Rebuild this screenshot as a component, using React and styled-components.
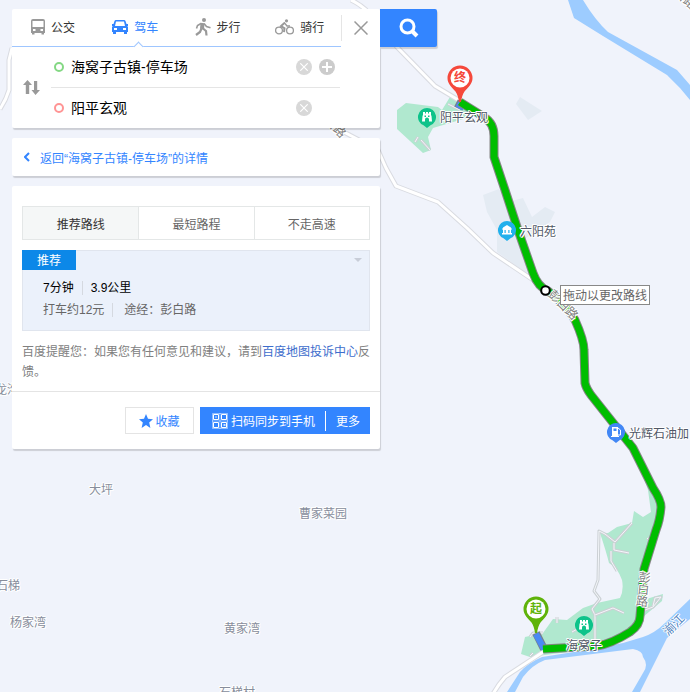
import React, { useState } from 'react';
import styled, { createGlobalStyle, css } from 'styled-components';

const GlobalStyle = createGlobalStyle`
  * {
    box-sizing: border-box;
  }

  body {
    margin: 0;
    background: #f0f3fb;
    font-family: 'Liberation Sans', 'Noto Sans CJK SC', sans-serif;
    font-size: 12px;
    color: #333333;
  }

  button,
  input {
    margin: 0;
    padding: 0;
    border: 0;
    background: none;
    font: inherit;
    color: inherit;
  }

  button {
    cursor: pointer;
  }

  svg {
    display: block;
    flex-shrink: 0;
  }
`;

const Page = styled.div`
  position: relative;
  min-height: 100vh;
  padding: 9px 12px;
  overflow: hidden;
`;

const MapLayer = styled.div`
  position: absolute;
  inset: 0;
  overflow: hidden;
`;

const MapDrawing = styled.svg`
  width: 100%;
  height: 100%;
`;

const MapLabel = styled.span`
  position: absolute;
  left: ${(props) => props.$x}px;
  top: ${(props) => props.$y}px;
  line-height: 16px;
  white-space: nowrap;
  color: ${(props) => props.$color || '#878d9c'};
  text-shadow: 1px 0 #ffffff, -1px 0 #ffffff, 0 1px #ffffff, 0 -1px #ffffff,
    1px 1px #ffffff, -1px -1px #ffffff;
  transform: rotate(${(props) => props.$angle || 0}deg);
  ${(props) =>
    props.$vertical &&
    css`
      writing-mode: vertical-rl;
    `}
`;

const Marker = styled.div`
  position: absolute;
  left: ${(props) => props.$x}px;
  top: ${(props) => props.$y}px;
  width: ${(props) => props.$size}px;
`;

const MarkerText = styled.span`
  position: absolute;
  top: 5px;
  left: 0;
  width: 100%;
  line-height: 16px;
  text-align: center;
  font-weight: 700;
  color: ${(props) => props.$color};
`;

const DragTip = styled.div`
  position: absolute;
  left: 560px;
  top: 285px;
  padding: 2px 2px 0;
  line-height: 16px;
  white-space: nowrap;
  color: #666666;
  background: #ffffff;
  border: 1px solid #888888;
`;

const Sidebar = styled.div`
  position: relative;
  width: min-content;
  display: grid;
  gap: 10px;
`;

const SearchRow = styled.div`
  display: flex;
  align-items: flex-start;
`;

const Card = styled.section`
  width: 368px;
  background: #ffffff;
  border-radius: 2px;
  box-shadow: 1px 2px 1px rgba(0, 0, 0, 0.15);
`;

const SearchButton = styled.button`
  width: 57px;
  height: 38px;
  display: flex;
  align-items: center;
  justify-content: center;
  color: #ffffff;
  background: #3385ff;
  border-radius: 0 2px 2px 0;
  box-shadow: 1px 2px 1px rgba(0, 0, 0, 0.15);
`;

const ModeRow = styled.div`
  display: flex;
  align-items: center;
  height: 38px;
`;

const ModeTabs = styled.div`
  flex: 1;
  display: flex;
  height: 38px;
  border-bottom: 1px solid #9fc6ff;
`;

const ModeTab = styled.button`
  position: relative;
  flex: 1;
  display: flex;
  align-items: center;
  justify-content: center;
  gap: 6px;
  padding-bottom: 2px;
  color: ${(props) => (props.$active ? '#3385ff' : '#333333')};

  svg {
    color: ${(props) => (props.$active ? '#3385ff' : '#999999')};
  }

  ${(props) =>
    props.$active &&
    css`
      &::after {
        content: '';
        position: absolute;
        left: 50%;
        bottom: -4px;
        width: 6px;
        height: 6px;
        background: #ffffff;
        border-top: 1px solid #9fc6ff;
        border-left: 1px solid #9fc6ff;
        transform: rotate(45deg);
      }
    `}
`;

const CloseButton = styled.button`
  width: 39px;
  height: 26px;
  display: flex;
  align-items: center;
  justify-content: center;
  border-left: 1px solid #e5e5e5;
`;

const Places = styled.div`
  display: flex;
  height: 81px;
`;

const SwapButton = styled.button`
  width: 39px;
  display: flex;
  align-items: center;
  justify-content: center;
`;

const PlaceList = styled.div`
  width: 289px;
`;

const PlaceRow = styled.div`
  display: flex;
  align-items: center;
  height: 40px;
  padding-left: 3px;

  & + & {
    height: 41px;
    border-top: 1px solid #e5e5e5;
  }
`;

const Ring = styled.label`
  width: 10px;
  height: 10px;
  border: 2px solid ${(props) => props.$color};
  border-radius: 50%;
`;

const PlaceInput = styled.input`
  width: 226px;
  height: 30px;
  padding: 0 0 2px 7px;
  font-size: 14px;
  color: #000000;
  outline: none;
`;

const RoundButton = styled.button`
  width: 16px;
  height: 16px;
  margin-left: 6px;
  display: flex;
  align-items: center;
  justify-content: center;
  color: #ffffff;
  background: ${(props) => (props.$dark ? '#cccccc' : '#d8d8d8')};
  border-radius: 50%;

  & + & {
    margin-left: 7px;
  }
`;

const BackLink = styled.a`
  display: flex;
  align-items: center;
  gap: 10px;
  height: 38px;
  padding-left: 12px;
  color: #3385ff;
  text-decoration: none;
`;

const RouteBody = styled.div`
  padding: 20px 10px 9px;
  border-bottom: 1px solid #e4e4e4;
`;

const PlanTabs = styled.div`
  display: grid;
  grid-template-columns: repeat(3, 1fr);
  height: 34px;
  margin-bottom: 10px;
  border: 1px solid #e4e7e7;
`;

const PlanTab = styled.button`
  color: ${(props) => (props.$active ? '#333333' : '#666666')};
  background: ${(props) => (props.$active ? '#f5f7f7' : '#ffffff')};

  & + & {
    border-left: 1px solid #e4e7e7;
  }
`;

const RouteItem = styled.div`
  position: relative;
  height: 81px;
  padding: 26px 20px;
  background: #ebf1fb;
  border: 1px solid #e0e5ee;
`;

const RouteTag = styled.span`
  position: absolute;
  left: -1px;
  top: -1px;
  width: 54px;
  height: 20px;
  line-height: 22px;
  text-align: center;
  color: #ffffff;
  background: #0c88e8;
`;

const Expand = styled.button`
  position: absolute;
  right: 7px;
  top: 7px;
  border-top: 4px solid #c8cdd8;
  border-left: 4px solid transparent;
  border-right: 4px solid transparent;
`;

const RouteLine = styled.div`
  display: flex;
  align-items: center;
  line-height: 22px;
  color: ${(props) => (props.$main ? '#000000' : '#666666')};

  span + span {
    margin-left: 8px;
    padding-left: 8px;
    line-height: 14px;
    border-left: 1px solid #d5d9e0;
  }

  &:last-child span + span {
    padding-left: 11px;
  }
`;

const Reminder = styled.p`
  margin: 11px -2px 0 0;
  line-height: 20px;
  color: #808080;

  a {
    color: #3d6dcc;
    text-decoration: none;
  }
`;

const Actions = styled.div`
  display: flex;
  justify-content: flex-end;
  gap: 6px;
  padding: 15px 10px;
`;

const SaveButton = styled.button`
  width: 69px;
  height: 27px;
  display: flex;
  align-items: center;
  justify-content: center;
  gap: 2px;
  color: #3385ff;
  border: 1px solid #e4e4e4;
`;

const SendGroup = styled.div`
  display: flex;
  align-items: center;
  height: 27px;
  color: #ffffff;
  background: #3385ff;
`;

const SendButton = styled.button`
  display: flex;
  align-items: center;
  gap: 3px;
  height: 20px;
  padding: 0 10px 0 12px;

  & + & {
    padding: 0 10px;
    border-left: 1px solid #ffffff;
  }
`;

const BusIcon = () => (
  <svg width="14" height="16" viewBox="0 0 14 16" fill="currentColor">
    <path
      fillRule="evenodd"
      d="M2 0h10a2 2 0 0 1 2 2v12h-1v1.500h-2.500V14h-7v1.500H1V14H0V2a2 2 0 0 1 2-2zM1.500 2v6h11V2zM2 10v2h2.500v-2zM9.500 10v2H12v-2z"
    />
  </svg>
);

const CarIcon = () => (
  <svg width="16" height="14" viewBox="0 0 16 14" fill="currentColor">
    <path
      fillRule="evenodd"
      d="M4 0h8q1.200 0 1.500 1L14.500 4H16v2h-.8l.8 1v5h-1v2h-3v-2H4v2H1v-2H0V7l.8-1H0V4h1.500L2.500 1Q2.800 0 4 0zM4 1.500 3 6h10L12 1.500zM2 8v2h3V8zM11 8v2h3V8z"
    />
  </svg>
);

const WalkIcon = () => (
  <svg width="16" height="18" viewBox="0 0 16 18" fill="none" stroke="currentColor">
    <circle cx="9" cy="2" r="2" fill="currentColor" stroke="none" />
    <path d="M7.500 5 7 11" strokeWidth="4" />
    <path d="M6 5.500 2.500 7.500 1.500 10.500M9 5.500l2.500 3 4 1.200" strokeWidth="1.600" />
    <path d="M6.500 10.500 5 14 1 17M8 10.500l3 2.500 .5 4.500" strokeWidth="2.200" />
  </svg>
);

const BikeIcon = () => (
  <svg width="19" height="16" viewBox="0 0 19 16" fill="none" stroke="currentColor">
    <circle cx="4" cy="11.500" r="3.400" strokeWidth="1.300" />
    <circle cx="15" cy="11.500" r="3.400" strokeWidth="1.300" />
    <circle cx="11.500" cy="1.800" r="1.600" fill="currentColor" stroke="none" />
    <path d="M10 3.500 6 7l3.500 2.200-.5 4" strokeWidth="2" />
    <path d="M10 4.500 12 7h3" strokeWidth="1.300" />
  </svg>
);

const SwapIcon = () => (
  <svg width="18" height="15" viewBox="0 0 18 15" fill="#999999">
    <path d="M4.500 0 9 5H6.200v9H2.800V5H0zM12.500 15 8.500 10h2.500V1h3.200v9H17z" />
  </svg>
);

const CrossIcon = ({ size, stroke, width = 1 }) => (
  <svg width={size} height={size} viewBox="0 0 14 14" fill="none" stroke={stroke} strokeWidth={width}>
    <path d="M0.500 0.500l13 13M13.500 0.500l-13 13" />
  </svg>
);

const PlusIcon = () => (
  <svg width="10" height="10" viewBox="0 0 10 10" stroke="#ffffff" strokeWidth="2">
    <path d="M5 0v10M0 5h10" />
  </svg>
);

const SearchIcon = () => (
  <svg width="20" height="20" viewBox="0 0 20 20" fill="none" stroke="currentColor">
    <circle cx="8.500" cy="8.500" r="6.500" strokeWidth="3" />
    <path d="M13 13l5 5" strokeWidth="4" />
  </svg>
);

const ChevronIcon = () => (
  <svg width="6" height="10" viewBox="0 0 6 10" fill="none" stroke="#3385ff" strokeWidth="2">
    <path d="M5 1 1 5l4 4" />
  </svg>
);

const StarIcon = () => (
  <svg width="14" height="14" viewBox="0 0 14 14" fill="#3385ff">
    <path d="M7 0l2 4.800 5 .4-3.800 3.300L11.400 14 7 11 2.600 14l1.200-5.500L0 5.200l5-.4z" />
  </svg>
);

const CodeIcon = () => (
  <svg width="16" height="16" viewBox="0 0 16 16" fill="none" stroke="#ffffff">
    <path d="M1.500 1.500h5v5h-5zM9.500 1.500h5v5h-5zM1.500 9.500h5v5h-5zM9.500 9.500h5v5h-5z" />
    <path
      d="M.5 .5h15v15H.5zM8 0v16M0 8h16"
      opacity="0.450"
    />
    <path d="M3.500 4h1M11.500 12h2" strokeWidth="1.500" />
  </svg>
);

const PoiIcon = ({ kind, color }) => (
  <svg width="18" height="21" viewBox="0 0 18 21">
    <path d="M9 0a9 9 0 0 1 3.500 17.300L9 20 5.500 17.300A9 9 0 0 1 9 0z" fill={color} />
    {kind === 'park' && (
      <path
        d="M5 4h2v1.500h1V4h2v1.500h1V4h2v3l.5 1 .5 5.500h-3V11.500a2 2 0 0 0-4 0v2H4L4.500 8 5 7zM6.500 7.500V9H8V7.500zM10 7.500V9h1.500V7.500z"
        fill="#ffffff"
        fillRule="evenodd"
      />
    )}
    {kind === 'home' && (
      <path
        d="M5 6.500l4-2.500 4 2.500v1h1v1h-1V12h1v1.500H4V12h1V8.500H4v-1h1zM6.500 9v3h1.200V9zM10.300 9v3h1.200V9z"
        fill="#ffffff"
        fillRule="evenodd"
      />
    )}
    {kind === 'fuel' && (
      <g fill="#ffffff">
        <path d="M5 4h6v9h1v1H4v-1h1zM6.500 5.500v2.500h3V5.500z" fillRule="evenodd" />
        <path d="M11 5l2.500 2v5H11" fill="none" stroke="#ffffff" />
      </g>
    )}
  </svg>
);

const EndPin = ({ color }) => (
  <svg width="26" height="38" viewBox="0 0 26 38">
    <path
      d="M13 .5A12.500 12.500 0 0 1 25.500 13c0 6-4.500 9.500-8 13.500Q15 30 14 37h-2q-1-7-3.500-10.500C5 22.500 .5 19 .5 13A12.500 12.500 0 0 1 13 .5z"
      fill={color}
    />
    <circle cx="13" cy="13" r="9.500" fill="#ffffff" />
  </svg>
);

const ROUTE =
  'M460 102 L484 117 Q494 123 494 136 L494 157 Q496 163 505 190 L518 230 L533 273 Q538 287 548 291 L560 301 Q568 308 575 320 Q584 340 584 350 L585 383 Q586 388 591 395 L633 448 L653 488 Q661 500 661 507 Q660 520 656 530 L644 569 L640 616 Q640 625 630 632 Q611 644 597 646 L543 649';

const roads = [
  'M351 0 Q358 3 366 10 L397 47 L435 86 L460 101',
  'M12 48 L9 60 L9 90 Q6 100 0 109',
  'M340 130 L378 150 L386 168 L396 186 L438 202 L467 228 L493 253 L545 288',
  'M543 652 L505 677 Q498 685 493 694'
];

const lanes = [
  'M632 523 L615 542 L605 534 L599 531 L598 580 L594 591 L600 599 L592 609 L595 615 L595 645',
  'M614 543 L614 550 L629 553 M611 551 L611 561 L617 571',
  'M595 615 L613 608 L624 613 M647 538 L651 542',
  'M572 632 L579 628 M557 617 L557 623 M530 656 L533 653 M530 637 L533 633 L543 633',
  'M645 610 L653 607 L661 597 L655 598 L653 606',
  'M448 104 L460 110 M421 140 L430 150 M415 142 L418 137'
];

const labels = [
  { text: '大坪', x: 89, y: 482 },
  { text: '曹家菜园', x: 299, y: 506 },
  { text: '石梯', x: -4, y: 578 },
  { text: '杨家湾', x: 10, y: 615 },
  { text: '黄家湾', x: 224, y: 621 },
  { text: '石梯村', x: 219, y: 685 },
  { text: '龙沟', x: -5, y: 382 },
  { text: '彭白路', x: 313, y: 115, angle: 45, color: '#808080' },
  { text: '彭白路', x: 545, y: 297, angle: 45, color: '#808080' },
  { text: '彭白路', x: 634, y: 571, angle: 6, color: '#808080', vertical: true },
  { text: '白路', x: 673, y: -9, angle: 40, color: '#808080' },
  { text: '湔江', x: 662, y: 617, angle: -45, color: '#5184c0' },
  { text: '阳平玄观', x: 440, y: 110, color: '#505766' },
  { text: '六阳苑', x: 520, y: 224, color: '#505766' },
  { text: '光辉石油加', x: 629, y: 426, color: '#505766' },
  { text: '海窝子', x: 566, y: 638, color: '#505766' }
];

const pois = [
  { kind: 'park', color: '#0dc38a', x: 418, y: 108 },
  { kind: 'home', color: '#22b0ec', x: 498, y: 221 },
  { kind: 'fuel', color: '#4287f5', x: 607, y: 423 },
  { kind: 'park', color: '#0dc38a', x: 575, y: 616 }
];

const modes = [
  { name: '公交', Icon: BusIcon },
  { name: '驾车', Icon: CarIcon },
  { name: '步行', Icon: WalkIcon },
  { name: '骑行', Icon: BikeIcon }
];

const plans = ['推荐路线', '最短路程', '不走高速'];

function RouteMap() {
  return (
    <MapLayer>
      <MapDrawing fill="none" strokeLinejoin="round">
        <g fill="#e4ebf3">
          <path d="M520 97L516 104 528 120 542 111z" />
          <path d="M483 195L499 189 508 202 523 198 532 217 545 207 555 212 550 222 523 240 532 277 497 252 497 230 487 212z" />
        </g>
        <g fill="#b0e8cf">
          <path d="M397 110L406 103 438 107 442 110 450 97 466 106 470 117 433 128 428 137 431 150 423 153 397 129z" />
          <path d="M521 654L525 637 543 633 553 619 567 620 583 608 597 603 620 598 Q624 590 622 580 Q618 568 609 563 Q606 551 600 533 L608 533 617 527 632 523 634 511 643 517 651 512 648 490 644 479 658 500 660 517 644 567 643 600 663 594 662 601 643 617 636 632 600 648 560 653 530 657z" />
        </g>
        <g fill="#9dccff">
          <path d="M568 0H583Q595 20 608 32L677 70 690 85V100L680 88 667 75 603 36 574 18z" />
          <path d="M690 599L665 623Q655 633 643 637L623 643 593 649 542 657Q528 663 520 672L507 692H515L523 677Q532 665 545 660L633 649Q643 651 643 657Q649 665 643 673L632 692H640L667 638 680 627 690 619z" />
        </g>
        {roads.map((d) => (
          <g key={d}>
            <path d={d} stroke="#d9dbe1" strokeWidth="5" />
            <path d={d} stroke="#ffffff" strokeWidth="3" />
          </g>
        ))}
        {lanes.map((d) => (
          <g key={d}>
            <path d={d} stroke="#cbd0d4" strokeWidth="3" />
            <path d={d} stroke="#f4f6fa" strokeWidth="1" />
          </g>
        ))}
        <path d="M536 633L544 649M456 103L464 107" stroke="#76808f" strokeWidth="8" />
        <path d="M536 634L544 649M457 104L464 108" stroke="#4a8af4" strokeWidth="6" />
        <path d={ROUTE} stroke="#858585" strokeWidth="9" />
        <path d={ROUTE} stroke="#00be00" strokeWidth="7" />
      </MapDrawing>
      {pois.map((poi, index) => (
        <Marker key={index} $x={poi.x} $y={poi.y} $size={18}>
          <PoiIcon kind={poi.kind} color={poi.color} />
        </Marker>
      ))}
      {labels.map((label, index) => (
        <MapLabel
          key={index}
          $x={label.x}
          $y={label.y}
          $angle={label.angle}
          $color={label.color}
          $vertical={label.vertical}
        >
          {label.text}
        </MapLabel>
      ))}
      <Marker $x={447} $y={65} $size={26}>
        <EndPin color="#f5483b" />
        <MarkerText $color="#f5483b">终</MarkerText>
      </Marker>
      <Marker $x={523} $y={596} $size={26}>
        <EndPin color="#5fb30a" />
        <MarkerText $color="#5fb30a">起</MarkerText>
      </Marker>
      <Marker $x={540} $y={285} $size={11}>
        <svg width="11" height="11" viewBox="0 0 11 11">
          <circle cx="5.500" cy="5.500" r="4.300" fill="#ffffff" stroke="#000000" strokeWidth="2" />
        </svg>
      </Marker>
      <DragTip>拖动以更改路线</DragTip>
    </MapLayer>
  );
}

export default function App() {
  const [mode, setMode] = useState('驾车');
  const [plan, setPlan] = useState('推荐路线');
  const [start, setStart] = useState('海窝子古镇-停车场');
  const [end, setEnd] = useState('阳平玄观');

  return (
    <Page>
      <GlobalStyle />
      <RouteMap />
      <Sidebar>
        <SearchRow>
          <Card>
            <ModeRow>
              <ModeTabs>
                {modes.map(({ name, Icon }) => (
                  <ModeTab key={name} $active={name === mode} onClick={() => setMode(name)}>
                    <Icon />
                    {name}
                  </ModeTab>
                ))}
              </ModeTabs>
              <CloseButton aria-label="关闭">
                <CrossIcon size={14} stroke="#999999" width={1.500} />
              </CloseButton>
            </ModeRow>
            <Places>
              <SwapButton
                aria-label="交换起点和终点"
                onClick={() => {
                  setStart(end);
                  setEnd(start);
                }}
              >
                <SwapIcon />
              </SwapButton>
              <PlaceList>
                <PlaceRow>
                  <Ring $color="#84d884" htmlFor="start" aria-label="起点" />
                  <PlaceInput id="start" value={start} onChange={(e) => setStart(e.target.value)} />
                  <RoundButton aria-label="清空起点" onClick={() => setStart('')}>
                    <CrossIcon size={8} stroke="#ffffff" width={2} />
                  </RoundButton>
                  <RoundButton $dark aria-label="添加途经点">
                    <PlusIcon />
                  </RoundButton>
                </PlaceRow>
                <PlaceRow>
                  <Ring $color="#ff9494" htmlFor="end" aria-label="终点" />
                  <PlaceInput id="end" value={end} onChange={(e) => setEnd(e.target.value)} />
                  <RoundButton aria-label="清空终点" onClick={() => setEnd('')}>
                    <CrossIcon size={8} stroke="#ffffff" width={2} />
                  </RoundButton>
                </PlaceRow>
              </PlaceList>
            </Places>
          </Card>
          <SearchButton aria-label="搜索">
            <SearchIcon />
          </SearchButton>
        </SearchRow>

        <Card>
          <BackLink href="#detail">
            <ChevronIcon />
            返回“海窝子古镇-停车场”的详情
          </BackLink>
        </Card>

        <Card>
          <RouteBody>
            <PlanTabs>
              {plans.map((name) => (
                <PlanTab key={name} $active={name === plan} onClick={() => setPlan(name)}>
                  {name}
                </PlanTab>
              ))}
            </PlanTabs>
            <RouteItem>
              <RouteTag>推荐</RouteTag>
              <Expand aria-label="展开" />
              <RouteLine $main>
                <span>7分钟</span>
                <span>3.9公里</span>
              </RouteLine>
              <RouteLine>
                <span>打车约12元</span>
                <span>途经：彭白路</span>
              </RouteLine>
            </RouteItem>
            <Reminder>
              百度提醒您：如果您有任何意见和建议，请到<a href="#feedback">百度地图投诉中心</a>反馈。
            </Reminder>
          </RouteBody>
          <Actions>
            <SaveButton>
              <StarIcon />
              收藏
            </SaveButton>
            <SendGroup>
              <SendButton>
                <CodeIcon />
                扫码同步到手机
              </SendButton>
              <SendButton>更多</SendButton>
            </SendGroup>
          </Actions>
        </Card>
      </Sidebar>
    </Page>
  );
}
